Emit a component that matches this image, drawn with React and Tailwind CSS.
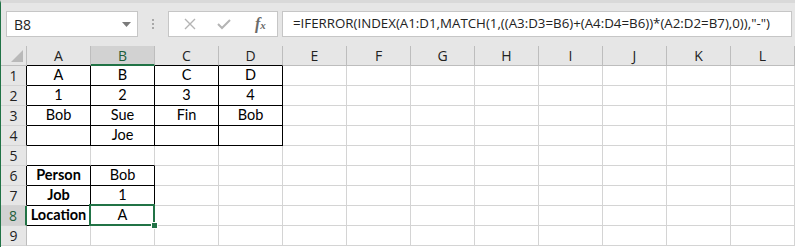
import React from "react";

const COLS = ["A", "B", "C", "D", "E", "F", "G", "H", "I", "J", "K", "L"];
const DATA = {
  1: ["A", "B", "C", "D"],
  2: ["1", "2", "3", "4"],
  3: ["Bob", "Sue", "Fin", "Bob"],
  4: ["", "Joe"],
  6: ["Person", "Bob"],
  7: ["Job", "1"],
  8: ["Location", "A"],
};
const BOLD = { "6-0": true, "7-0": true, "8-0": true };

function inRange(r, c) {
  if (r >= 1 && r <= 4 && c >= 0 && c <= 3) return true;
  if (r >= 6 && r <= 8 && c >= 0 && c <= 1) return true;
  return false;
}

function Cell({ r, c }) {
  const rightBlack = inRange(r, c) || inRange(r, c + 1);
  const bottomBlack = inRange(r, c) || inRange(r + 1, c);
  const text = (DATA[r] && DATA[r][c]) || "";
  const bold = BOLD[`${r}-${c}`];
  const selected = r === 8 && c === 1;
  return (
    <div
      className={
        "relative w-[64px] h-[20px] shrink-0 border-r border-b flex items-center justify-center text-[14.5px] text-black " +
        (rightBlack ? "border-r-black " : "border-r-[#d4d4d4] ") +
        (bottomBlack ? "border-b-black " : "border-b-[#d4d4d4] ") +
        (bold ? "font-bold" : "")
      }
    >
      <span className="leading-none">{text}</span>
      {selected && (
        <>
          <div className="absolute z-10 -left-[2px] -top-[2px] w-[66px] h-[22px] border-2 border-[#217346]" />
          <div className="absolute z-20 -right-[4px] -bottom-[4px] w-[7px] h-[7px] bg-[#217346] border border-white" />
        </>
      )}
    </div>
  );
}

function RowHeader({ r }) {
  const black = inRange(r, 0);
  const sel = r === 8;
  return (
    <div
      className={
        "w-[26px] h-[20px] shrink-0 border-b border-b-[#d4d4d4] flex items-center justify-center text-[14px] " +
        (sel
          ? "bg-[#d2d2d2] text-[#1e5e3a] border-r-2 border-r-[#217346]"
          : "bg-[#e6e6e6] text-[#222] border-r " + (black ? "border-r-black" : "border-r-[#bdbdbd]"))
      }
      style={{ fontFamily: "'Open Sans', 'Liberation Sans', sans-serif" }}
    >
      {r}
    </div>
  );
}

export default function App() {
  const rows = [1, 2, 3, 4, 5, 6, 7, 8, 9];
  return (
    <div
      className="w-[795px] h-[247px] overflow-hidden bg-white flex flex-col"
      style={{ fontFamily: "'Lato', 'Liberation Sans', sans-serif" }}
    >
      {/* Formula bar */}
      <div className="h-[46px] shrink-0 bg-[#e6e6e6] border-t-[3px] border-t-[#d9d9d9] border-l border-l-[#217346] flex items-start pt-[8px] pl-[5px] pr-[3px]">
        <div
          className="w-[132px] h-[26px] bg-white border border-[#c6c6c6] flex items-center justify-between pl-[7px] pr-[6px] text-[14px] text-[#222]"
          style={{ fontFamily: "'Open Sans', 'Liberation Sans', sans-serif" }}
        >
          <span>B8</span>
          <svg width="9" height="5" viewBox="0 0 9 5">
            <polygon points="0,0 9,0 4.5,5" fill="#7a7a7a" />
          </svg>
        </div>
        <div className="w-[30px] h-[26px] flex flex-col items-center justify-center gap-[2px]">
          <div className="w-[2px] h-[2px] bg-[#a8a8a8]" />
          <div className="w-[2px] h-[2px] bg-[#a8a8a8]" />
          <div className="w-[2px] h-[2px] bg-[#a8a8a8]" />
        </div>
        <div className="w-[110px] h-[26px] bg-white border border-[#c6c6c6] flex items-center pl-[15px]">
          <svg width="12" height="12" viewBox="0 0 12 12">
            <path d="M1 1 L11 11 M11 1 L1 11" stroke="#b4b4b4" strokeWidth="1.4" fill="none" />
          </svg>
          <svg width="14" height="12" viewBox="0 0 14 12" className="ml-[21px]">
            <path d="M1 6 L5 10 L13 2" stroke="#b4b4b4" strokeWidth="2" fill="none" />
          </svg>
          <span
            className="ml-[24px] text-[16px] italic font-bold text-[#6a6a6a] leading-none"
            style={{ fontFamily: "'Liberation Serif', serif" }}
          >
            f<span className="text-[11px]">x</span>
          </span>
        </div>
        <div
          className="ml-[4px] flex-1 h-[26px] bg-white border border-[#c6c6c6] flex items-center pl-[10px] text-[13.3px] text-[#222] whitespace-nowrap"
          style={{ fontFamily: "'Open Sans', 'Liberation Sans', sans-serif" }}
        >
          =IFERROR(INDEX(A1:D1,MATCH(1,((A3:D3=B6)+(A4:D4=B6))*(A2:D2=B7),0)),"-")
        </div>
      </div>

      {/* Grid */}
      <div className="flex-1 border-l border-l-[#217346] flex flex-col">
        <div className="flex h-[20px] shrink-0">
          <div className="w-[26px] h-[20px] shrink-0 bg-[#e6e6e6] border-r border-r-[#bdbdbd] border-b border-b-[#bdbdbd] flex items-end justify-end pr-[3px] pb-[3px]">
            <svg width="12" height="12" viewBox="0 0 12 12">
              <polygon points="12,0 12,12 0,12" fill="#b9b9b9" />
            </svg>
          </div>
          {COLS.map((c, i) => {
            const sel = i === 1;
            const black = i <= 3;
            return (
              <div
                key={c}
                className={
                  "w-[64px] h-[20px] shrink-0 border-r border-r-[#bdbdbd] flex items-center justify-center text-[14px] " +
                  (sel
                    ? "bg-[#d2d2d2] text-[#1e5e3a] border-b-2 border-b-[#217346]"
                    : "bg-[#e6e6e6] text-[#222] border-b " + (black ? "border-b-black" : "border-b-[#bdbdbd]"))
                }
                style={{ fontFamily: "'Open Sans', 'Liberation Sans', sans-serif" }}
              >
                {c}
              </div>
            );
          })}
        </div>
        {rows.map((r) => (
          <div key={r} className="flex h-[20px] shrink-0">
            <RowHeader r={r} />
            {COLS.map((c, i) => (
              <Cell key={c} r={r} c={i} />
            ))}
          </div>
        ))}
      </div>
    </div>
  );
}
